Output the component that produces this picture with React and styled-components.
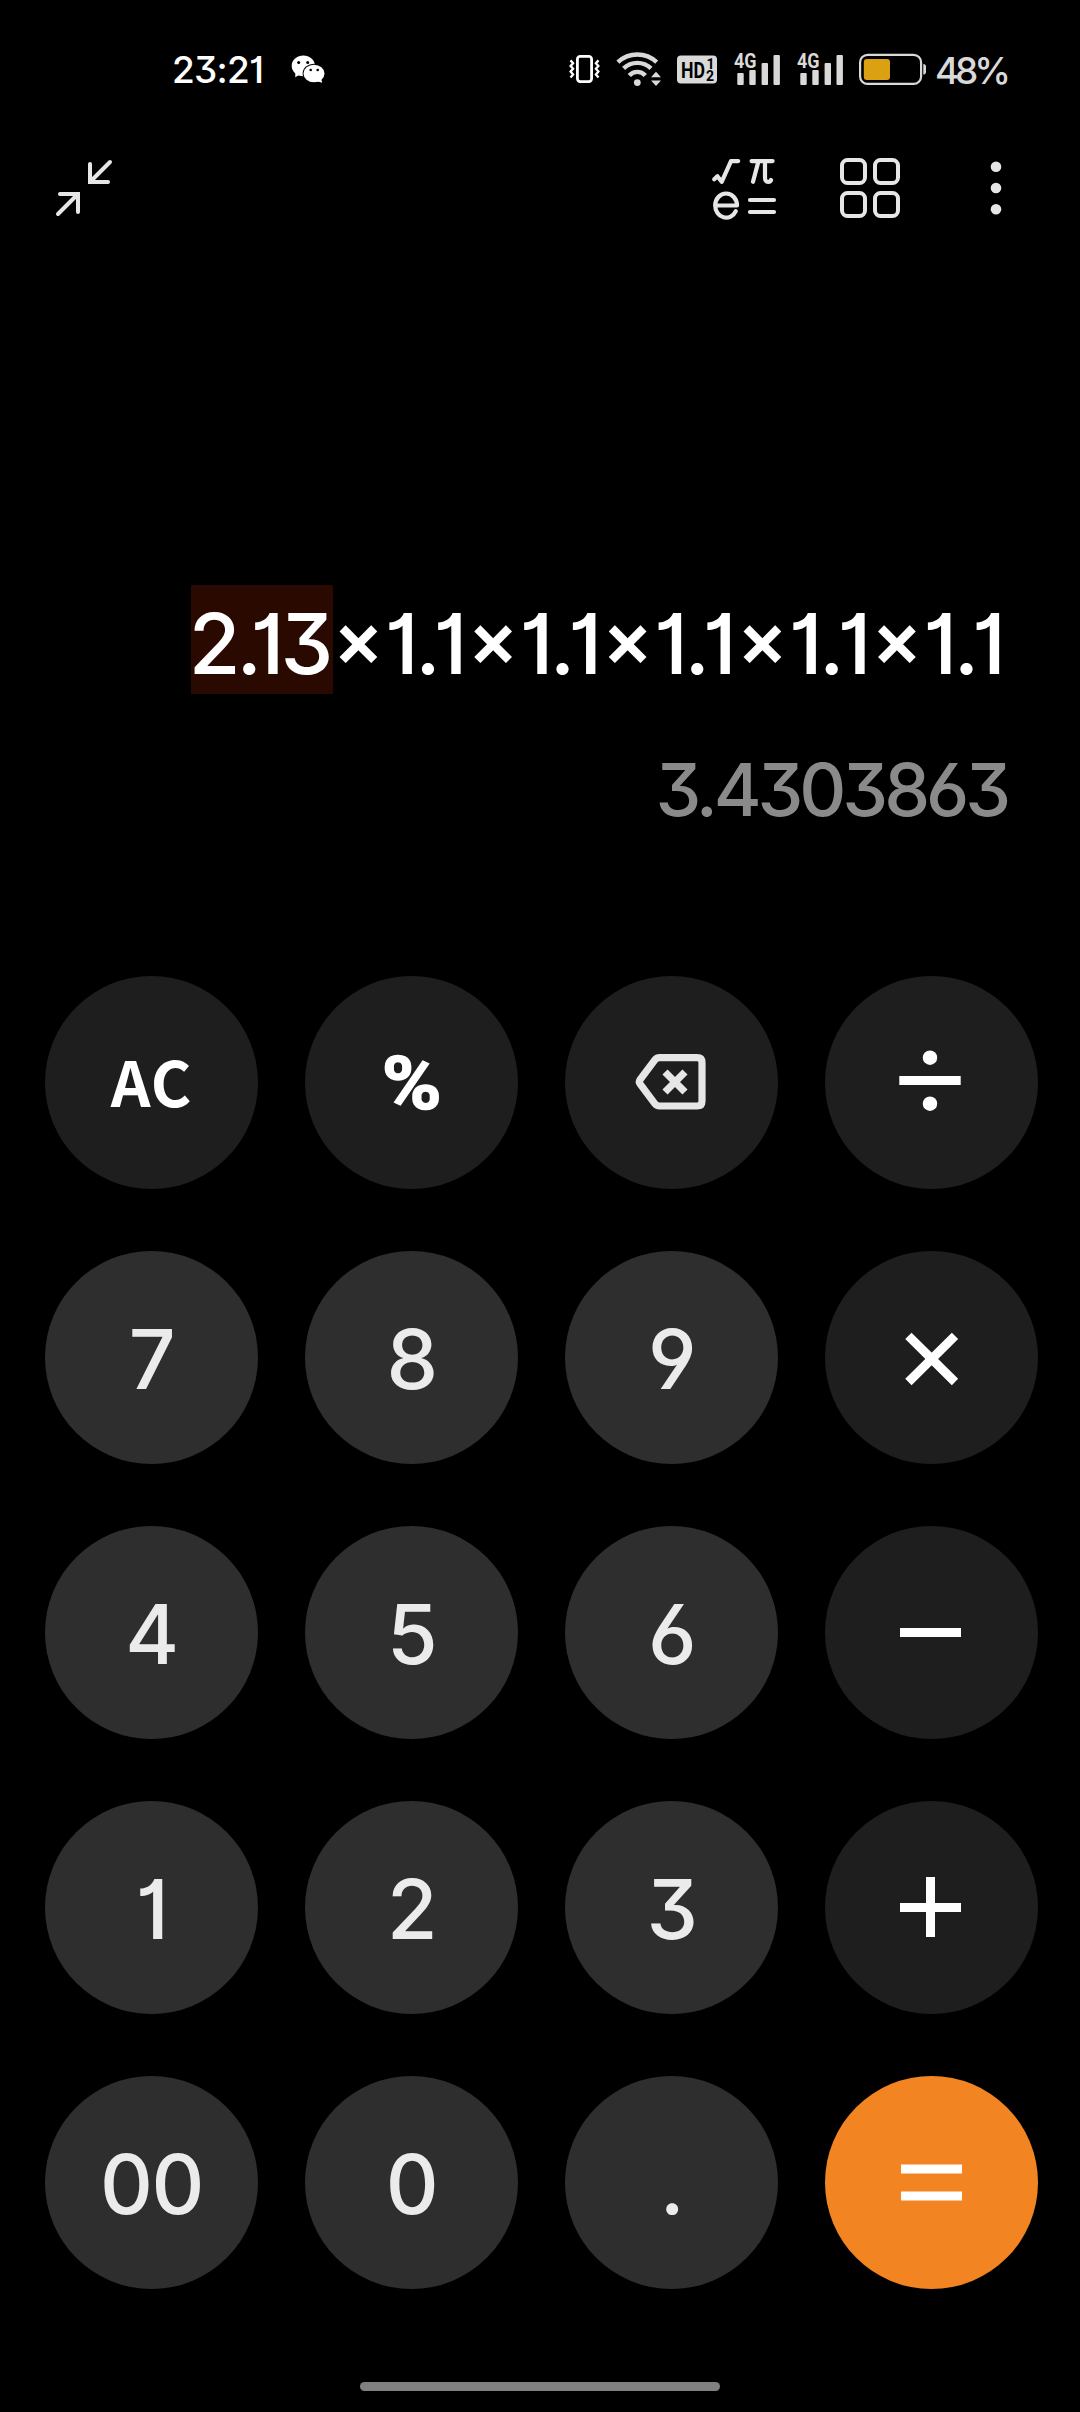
import React from "react";
import styled, { createGlobalStyle } from "styled-components";

const GlobalStyle = createGlobalStyle`
  * {
    box-sizing: border-box;
  }
  body {
    margin: 0;
    background: #000000;
  }
`;
const Screen = styled.div`
  display: flex;
  flex-direction: column;
  width: 1080px;
  height: 2412px;
  overflow: hidden;
  background: #000000;
  color: #ffffff;
  font-family: Inter, Roboto, sans-serif;
  font-feature-settings: "cv01", "cv03", "cv04", "cv09";
  svg {
    display: block;
    flex: none;
    overflow: visible;
  }
`;
const StatusBar = styled.div`
  display: flex;
  align-items: center;
  height: 138px;
  padding: 0 75px 0 172px;
`;
const Clock = styled.div`
  width: 119px;
  padding-top: 2px;
  font-size: 37px;
  font-weight: 500;
  line-height: 44px;
  letter-spacing: -0.8px;
`;
const StatusIcons = styled.div`
  display: flex;
  align-items: center;
  gap: 15px;
  margin-left: auto;
`;
const Percent = styled.div`
  width: 70px;
  margin-left: -7px;
  padding-top: 4px;
  font-size: 37px;
  font-weight: 450;
  line-height: 44px;
  letter-spacing: -4.2px;
  color: #d9d9d9;
  white-space: nowrap;
`;
const Toolbar = styled.div`
  display: flex;
  align-items: center;
  height: 100px;
  padding: 0 74px 0 54px;
`;
const Tools = styled.div`
  display: flex;
  align-items: center;
  gap: 64px;
  margin-left: auto;
`;
const Display = styled.div`
  display: flex;
  flex-direction: column;
  align-items: flex-end;
  height: 738px;
  padding: 347px 74px 0 0;
`;
const Expression = styled.div`
  display: flex;
  height: 109px;
  font-size: 84px;
  font-weight: 500;
  line-height: 117px;
  letter-spacing: 0;
  white-space: nowrap;
`;
const Operand = styled.span`
  width: 142px;
  background: #2a0a00;
  letter-spacing: -4.1px;
  text-indent: -2px;
`;
const Times = styled.span`
  font-size: 76px;
  font-weight: 600;
  line-height: 0;
  letter-spacing: 0.6px;
  vertical-align: 8px;
`;
const Result = styled.div`
  margin: 50px -1px 0 0;
  font-size: 73px;
  font-weight: 450;
  line-height: 92px;
  letter-spacing: -4.1px;
  color: #8a8a8a;
`;
const Keypad = styled.div`
  display: grid;
  grid-template-columns: repeat(4, 213px);
  grid-auto-rows: 213px;
  gap: 62px 47px;
  padding-left: 45px;
`;
const Key = styled.button`
  display: flex;
  align-items: center;
  justify-content: center;
  padding: 0;
  border: 0;
  border-radius: 50%;
  background: ${(props) => props.$bg};
  color: #ebebeb;
  font: inherit;
`;
const Digit = styled.span`
  padding-top: 4px;
  font-size: 82px;
  font-weight: 450;
  line-height: 100px;
  letter-spacing: -1.5px;
`;
const Word = styled.span`
  padding-bottom: 6px;
  font-family: "Noto Sans CJK SC", sans-serif;
  font-size: 62px;
  font-weight: 700;
  line-height: 90px;
  letter-spacing: 1px;
  color: #ffffff;
`;
const PercentSign = styled.span`
  font-family: Roboto, sans-serif;
  font-size: 75px;
  font-weight: 700;
  line-height: 90px;
  color: #ffffff;
  transform: scaleX(1.08);
  -webkit-text-stroke: 1.5px #ffffff;
`;
const HomeBar = styled.div`
  width: 360px;
  height: 9px;
  margin: 93px auto 0;
  border-radius: 5px;
  background: #808080;
`;

const Wechat = () => (
  <svg width="34" height="30" viewBox="0 0 34 30" fill="#fff">
    <path d="M4.5 18 L4.2 23.2 L10 20 Z" />
    <ellipse cx="12.3" cy="11.8" rx="11.6" ry="10.4" />
    <ellipse cx="23" cy="19.5" rx="11.4" ry="9.8" fill="#000" />
    <ellipse cx="23" cy="19.5" rx="10.5" ry="8.8" />
    <path d="M30 24 L31.2 28.8 L25 27 Z" />
    <g fill="#000">
      <circle cx="7.7" cy="8.4" r="1.5" />
      <circle cx="16.7" cy="8.4" r="1.5" />
      <circle cx="19.7" cy="16" r="1.3" />
      <circle cx="26.7" cy="16" r="1.3" />
    </g>
  </svg>
);

const Vibrate = () => (
  <svg width="32" height="30" viewBox="0 0 32 30" fill="none" stroke="#fff">
    <rect x="8.4" y="2.4" width="14.2" height="25.2" rx="2.8" strokeWidth="2.8" />
    <path d="M1.5 6.4 L4.1 9.2 L1.6 12 L4.1 14.8 L1.6 17.6 L4.1 20.4 L1.5 23.4" strokeWidth="2.3" />
    <path d="M29.5 6.4 L26.9 9.2 L29.4 12 L26.9 14.8 L29.4 17.6 L26.9 20.4 L29.5 23.4" strokeWidth="2.3" />
  </svg>
);

const Wifi = () => (
  <svg width="46" height="36" viewBox="0 0 46 36" fill="none" stroke="#d9d9d9" strokeWidth="4.4">
    <path d="M1.9 11.1 A28.4 28.4 0 0 1 40.7 11.1" />
    <path d="M7.6 17.4 A19.8 19.8 0 0 1 35 17.4" />
    <path d="M13.3 24.4 A10.8 10.8 0 0 1 29.3 24.4" />
    <g fill="#d9d9d9" stroke="none">
      <circle cx="21.3" cy="31.6" r="3.4" />
      <path d="M40 20.8 L35 26.2 H45 Z M35 29.6 H45 L40 35 Z" />
    </g>
  </svg>
);

const HdBadge = () => (
  <svg width="41" height="30" viewBox="0 0 41 30" fontFamily="Roboto, sans-serif" fontWeight="700">
    <rect x="0" y="1.5" width="40" height="28" rx="4" fill="#d9d9d9" />
    <text x="4" y="23.6" fontSize="22" textLength="24" lengthAdjust="spacingAndGlyphs">HD</text>
    <text x="29.4" y="15.3" fontSize="14">1</text>
    <text x="29" y="26.6" fontSize="14">2</text>
  </svg>
);

const Signal = () => (
  <svg width="48" height="36" viewBox="0 0 48 36" fill="#d9d9d9">
    <text
      x="1"
      y="17.4"
      fontSize="21"
      fontFamily="Roboto, sans-serif"
      fontWeight="700"
      textLength="22.5"
      lengthAdjust="spacingAndGlyphs"
    >
      4G
    </text>
    <rect x="4.3" y="22" width="6.4" height="12" rx="1" />
    <rect x="16.3" y="19" width="6.4" height="15" rx="1" />
    <rect x="28.6" y="12" width="6.4" height="22" rx="1" />
    <rect x="40.5" y="4" width="6.4" height="30" rx="1" />
  </svg>
);

const Battery = () => (
  <svg width="68" height="32" viewBox="0 0 68 32">
    <rect x="1.1" y="1.9" width="61" height="29" rx="7.5" fill="none" stroke="#d9d9d9" strokeWidth="2.2" />
    <rect x="4.8" y="6" width="26.2" height="21" rx="3" fill="#dba112" />
    <path d="M64.3 11 Q67 11 67 13.8 V18.8 Q67 21.6 64.3 21.6 Z" fill="#d9d9d9" />
  </svg>
);

const Collapse = () => (
  <svg width="62" height="60" viewBox="0 0 62 60" fill="none" stroke="#e6e6e6" strokeWidth="4" strokeLinecap="round">
    <path d="M36 6 V24 H54 M56 4 L36.5 23.5" />
    <path d="M6 36 H24 V54 M4 56 L23.5 36.5" />
  </svg>
);

const Scientific = () => (
  <svg
    width="64"
    height="60"
    viewBox="0 0 64 60"
    fill="none"
    stroke="#e6e6e6"
    strokeWidth="4.2"
    strokeLinecap="round"
    strokeLinejoin="round"
  >
    <path d="M2.2 21.3 L5.4 18.2 L9.7 23.8 L19 3.1 H26.2" />
    <path d="M39.6 3.1 H60.6 M46.5 3.1 L41 23.8 M53 3.1 V19 Q52.8 23.9 56.2 23.9 Q58.6 23.8 59 22" />
    <path d="M3.2 47.5 H25 A10.9 12 0 0 0 3.2 47.5 A10.9 12 0 0 0 23.8 53.1" />
    <path d="M38 42 H62 M38 54 H62" />
  </svg>
);

const Apps = () => (
  <svg width="60" height="60" viewBox="0 0 60 60" fill="none" stroke="#e6e6e6" strokeWidth="4">
    <rect x="2" y="2" width="23" height="23" rx="5.5" />
    <rect x="35" y="2" width="23" height="23" rx="5.5" />
    <rect x="2" y="35" width="23" height="23" rx="5.5" />
    <rect x="35" y="35" width="23" height="23" rx="5.5" />
  </svg>
);

const More = () => (
  <svg width="42" height="60" viewBox="0 0 42 60" fill="#e6e6e6">
    <circle cx="32" cy="8.7" r="5.3" />
    <circle cx="32" cy="30" r="5.3" />
    <circle cx="32" cy="51.3" r="5.3" />
  </svg>
);

const KeyIcon = ({ children }) => (
  <svg width="213" height="213" viewBox="0 0 213 213" fill="none" stroke="#fff" strokeWidth="9">
    {children}
  </svg>
);

const digit = "#2e2e2e";
const func = "#1e1e1e";

const App = () => {
  const factors = ["1.1", "1.1", "1.1", "1.1", "1.1"];
  const keys = [
    { name: "AC", bg: func, label: <Word>AC</Word> },
    { name: "%", bg: func, label: <PercentSign>%</PercentSign> },
    {
      name: "delete",
      bg: func,
      label: (
        <KeyIcon>
          <g stroke="#e6e6e6" strokeWidth="7.2">
            <path d="M94.5 81.7 H132 Q137 81.7 137 86.5 V125.2 Q137 130 132 130 H94.5 Q91.5 130 89.7 127.5 L75.2 108.2 Q73.4 105.8 75.2 103.5 L89.7 84.2 Q91.5 81.7 94.5 81.7 Z" />
            <path d="M100 96 L120 116 M120 96 L100 116" />
          </g>
        </KeyIcon>
      )
    },
    {
      name: "divide",
      bg: func,
      label: (
        <KeyIcon>
          <path d="M74.3 104.5 H135.7" />
          <g fill="#fff" stroke="none">
            <circle cx="105" cy="81.7" r="7.2" />
            <circle cx="105" cy="127.7" r="7.2" />
          </g>
        </KeyIcon>
      )
    },
    { name: "7", bg: digit, label: <Digit>7</Digit> },
    { name: "8", bg: digit, label: <Digit>8</Digit> },
    { name: "9", bg: digit, label: <Digit>9</Digit> },
    {
      name: "multiply",
      bg: func,
      label: (
        <KeyIcon>
          <path d="M83.4 84.9 L130 131 M130 84.9 L83.4 131" />
        </KeyIcon>
      )
    },
    { name: "4", bg: digit, label: <Digit>4</Digit> },
    { name: "5", bg: digit, label: <Digit>5</Digit> },
    { name: "6", bg: digit, label: <Digit>6</Digit> },
    {
      name: "minus",
      bg: func,
      label: (
        <KeyIcon>
          <path d="M75 106.5 H136" />
        </KeyIcon>
      )
    },
    { name: "1", bg: digit, label: <Digit>1</Digit> },
    { name: "2", bg: digit, label: <Digit>2</Digit> },
    { name: "3", bg: digit, label: <Digit>3</Digit> },
    {
      name: "plus",
      bg: func,
      label: (
        <KeyIcon>
          <path d="M75 106.5 H136 M105.5 76 V136" />
        </KeyIcon>
      )
    },
    { name: "00", bg: digit, label: <Digit>00</Digit> },
    { name: "0", bg: digit, label: <Digit>0</Digit> },
    { name: ".", bg: digit, label: <Digit>.</Digit> },
    {
      name: "equals",
      bg: "#f28422",
      label: (
        <KeyIcon>
          <path d="M76 93 H137 M76 120 H137" />
        </KeyIcon>
      )
    }
  ];
  return (
    <Screen>
      <GlobalStyle />
      <StatusBar>
        <Clock>23:21</Clock>
        <Wechat />
        <StatusIcons>
          <Vibrate />
          <Wifi />
          <HdBadge />
          <Signal />
          <Signal />
          <Battery />
          <Percent>48%</Percent>
        </StatusIcons>
      </StatusBar>
      <Toolbar>
        <Collapse />
        <Tools>
          <Scientific />
          <Apps />
          <More />
        </Tools>
      </Toolbar>
      <Display>
        <Expression>
          <Operand>2.13</Operand>
          {factors.map((factor, i) => (
            <span key={i}>
              <Times>×</Times>
              {factor}
            </span>
          ))}
        </Expression>
        <Result>3.4303863</Result>
      </Display>
      <Keypad>
        {keys.map((key) => (
          <Key key={key.name} $bg={key.bg} aria-label={key.name}>
            {key.label}
          </Key>
        ))}
      </Keypad>
      <HomeBar />
    </Screen>
  );
};

export default App;
